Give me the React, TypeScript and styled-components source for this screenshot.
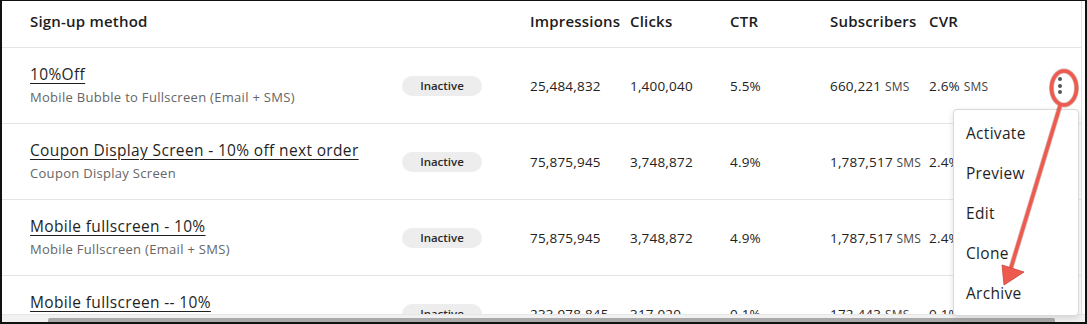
import React from "react";
import styled, { createGlobalStyle } from "styled-components";

const Global = createGlobalStyle`
  html, body { margin: 0; padding: 0; background: #fff; }
  body { font-family: "Open Sans", "Noto Sans", sans-serif; color: #1f1f1f; }
`;

const Frame = styled.div`
  position: relative;
  width: 1087px;
  height: 324px;
  box-sizing: border-box;
  border-top: 1px solid #111;
  border-left: 2px solid #111;
  border-right: 2px solid #111;
  border-bottom: 2px solid #111;
  overflow: hidden;
  display: flex;
  flex-direction: column;
  background: #fff;
`;

const Viewport = styled.div`
  flex: 1;
  overflow: hidden;
  border-right: 1px solid #e2e2e2;
  margin-right: 3px;
`;

const COLS = "372px 128px 100px 100px 100px 99px 1fr 40px";

const HeaderRow = styled.div`
  display: grid;
  grid-template-columns: ${COLS};
  align-items: center;
  height: 46px;
  padding-left: 28px;
  border-bottom: 1px solid #e4e4e4;
`;

const HeadCell = styled.div`
  font-weight: 600;
  font-size: 15px;
  letter-spacing: 0.2px;
  color: #1c1c1c;
  padding-bottom: 7px;
  white-space: nowrap;
`;

const Row = styled.div`
  display: grid;
  grid-template-columns: ${COLS};
  align-items: center;
  height: 75px;
  padding-left: 28px;
  border-bottom: 1px solid #e4e4e4;
`;

const NameCell = styled.div`
  display: flex;
  flex-direction: column;
  gap: 3px;
  margin-top: -3px;
`;

const Title = styled.a`
  font-size: 15.5px;
  letter-spacing: 0.35px;
  color: #1f1f1f;
  text-decoration: underline;
  text-underline-offset: 3px;
  text-decoration-thickness: 1px;
  white-space: nowrap;
`;

const Subtitle = styled.span`
  font-size: 13px;
  letter-spacing: 0.3px;
  color: #666;
  white-space: nowrap;
`;

const Badge = styled.span`
  justify-self: start;
  display: inline-flex;
  align-items: center;
  justify-content: center;
  width: 80px;
  height: 20px;
  border-radius: 10px;
  background: #ededed;
  font-size: 11.5px;
  font-weight: 600;
  color: #2a2a2a;
`;

const Num = styled.div`
  font-size: 13.5px;
  letter-spacing: 0.2px;
  color: #222;
  white-space: nowrap;
`;

const Unit = styled.span`
  font-size: 12px;
  color: #444;
`;

const Kebab = styled.div`
  display: flex;
  flex-direction: column;
  align-items: center;
  gap: 2.5px;
  width: 12px;
  justify-self: start;
  margin-left: 13px;
  & > i {
    width: 4px;
    height: 4px;
    border-radius: 50%;
    background: #555;
    display: block;
  }
`;

const ScrollBar = styled.div`
  height: 7px;
  background: #f1f1f1;
  border-top: 1px solid #e6e6e6;
  display: flex;
  align-items: flex-end;
  padding-left: 46px;
  padding-right: 30px;
`;

const Thumb = styled.div`
  flex: 1;
  height: 4px;
  background: #a9a9a9;
  border-radius: 2px 2px 0 0;
`;

const Menu = styled.div`
  position: absolute;
  left: 951px;
  top: 108px;
  width: 126px;
  height: 207px;
  box-sizing: border-box;
  background: #fff;
  border: 1px solid #d9d9d9;
  border-radius: 4px;
  box-shadow: 0 2px 6px rgba(0, 0, 0, 0.12);
  display: flex;
  flex-direction: column;
  padding-top: 3px;
`;

const MenuItem = styled.div`
  flex: 0 0 40px;
  display: flex;
  align-items: center;
  padding-left: 12px;
  font-size: 15.5px;
  letter-spacing: 0.3px;
  color: #1f1f1f;
`;

const Overlay = styled.svg`
  position: absolute;
  left: 0;
  top: 0;
  pointer-events: none;
`;

type R = {
  title: string;
  sub: string;
  imp: string;
  clicks: string;
  ctr: string;
  subs: string;
  cvr: string;
};

const rows: R[] = [
  { title: "10%Off", sub: "Mobile Bubble to Fullscreen (Email + SMS)", imp: "25,484,832", clicks: "1,400,040", ctr: "5.5%", subs: "660,221", cvr: "2.6%" },
  { title: "Coupon Display Screen - 10% off next order", sub: "Coupon Display Screen", imp: "75,875,945", clicks: "3,748,872", ctr: "4.9%", subs: "1,787,517", cvr: "2.4%" },
  { title: "Mobile fullscreen - 10%", sub: "Mobile Fullscreen (Email + SMS)", imp: "75,875,945", clicks: "3,748,872", ctr: "4.9%", subs: "1,787,517", cvr: "2.4%" },
  { title: "Mobile fullscreen -- 10%", sub: "Mobile Fullscreen (Email + SMS)", imp: "233,978,845", clicks: "317,020", ctr: "0.1%", subs: "172,443", cvr: "0.1%" },
];

export default function App() {
  return (
    <>
      <Global />
      <Frame>
        <Viewport>
          <HeaderRow>
            <HeadCell>Sign-up method</HeadCell>
            <HeadCell />
            <HeadCell>Impressions</HeadCell>
            <HeadCell>Clicks</HeadCell>
            <HeadCell>CTR</HeadCell>
            <HeadCell>Subscribers</HeadCell>
            <HeadCell>CVR</HeadCell>
            <HeadCell />
          </HeaderRow>
          {rows.map((r, i) => (
            <Row key={i}>
              <NameCell>
                <Title>{r.title}</Title>
                <Subtitle>{r.sub}</Subtitle>
              </NameCell>
              <Badge>Inactive</Badge>
              <Num>{r.imp}</Num>
              <Num>{r.clicks}</Num>
              <Num>{r.ctr}</Num>
              <Num>
                {r.subs} <Unit>SMS</Unit>
              </Num>
              <Num>
                {r.cvr} <Unit>SMS</Unit>
              </Num>
              {i === 0 ? (
                <Kebab>
                  <i />
                  <i />
                  <i />
                </Kebab>
              ) : (
                <div />
              )}
            </Row>
          ))}
        </Viewport>
        <ScrollBar>
          <Thumb />
        </ScrollBar>
        <Menu>
          <MenuItem>Activate</MenuItem>
          <MenuItem>Preview</MenuItem>
          <MenuItem>Edit</MenuItem>
          <MenuItem>Clone</MenuItem>
          <MenuItem>Archive</MenuItem>
        </Menu>
        <Overlay width="1087" height="324" viewBox="0 0 1087 324">
          <g stroke="#8a2a22" strokeWidth="5" fill="none" strokeLinecap="round" opacity="0.35">
            <ellipse cx="1062" cy="87" rx="12.5" ry="17" />
            <line x1="1058" y1="105" x2="1008" y2="270" />
          </g>
          <g stroke="#ee5b4e" strokeWidth="3.5" fill="none" strokeLinecap="round">
            <ellipse cx="1062" cy="87" rx="12.5" ry="17" />
            <line x1="1058" y1="105" x2="1008" y2="270" />
          </g>
          <polygon points="1002,284 1000,264 1022,271" fill="#ee5b4e" stroke="#c9443a" strokeWidth="0.8" />
        </Overlay>
      </Frame>
    </>
  );
}
